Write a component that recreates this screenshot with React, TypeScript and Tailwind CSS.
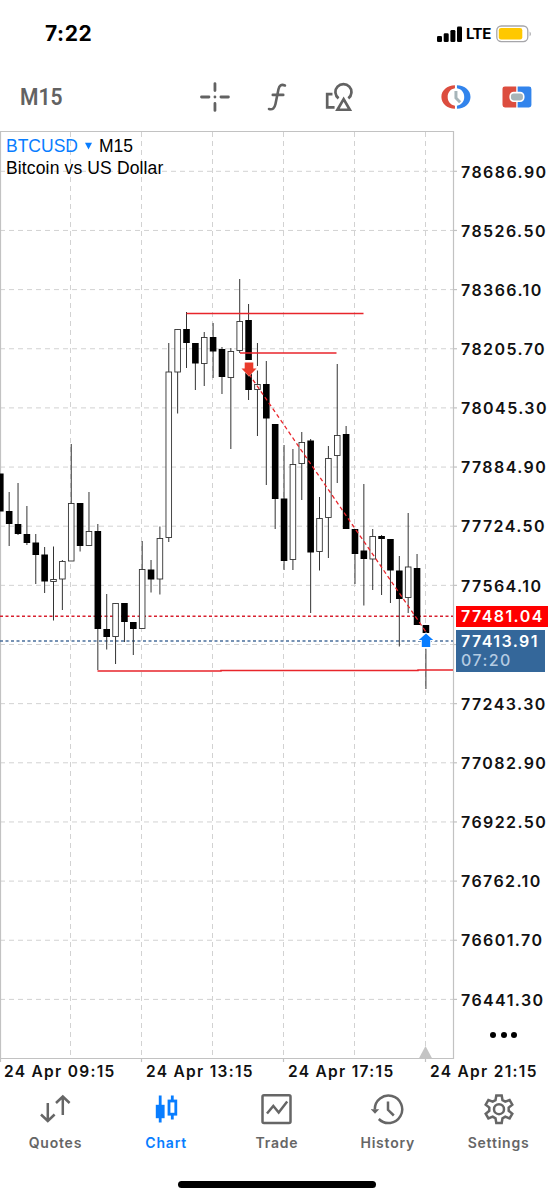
import type { ReactNode } from "react";

// [wick top, wick bottom, body top, body bottom, bullish]
type Candle = [number, number, number, number, boolean];

const candles: Candle[] = [
  [474, 511, 473.5, 511.5, false],
  [492, 546, 511, 524, false],
  [483, 535, 524, 534, false],
  [506, 545, 534, 543, false],
  [534, 584, 542.5, 555, false],
  [547, 593, 554.5, 581.5, false],
  [546.5, 620.5, 579.5, 581.5, true],
  [560, 610, 561.5, 579, true],
  [444, 561, 503.5, 561, true],
  [503, 551.5, 503, 546, false],
  [492, 546, 531.5, 545.5, true],
  [524, 670, 531, 629, false],
  [594, 649.5, 629, 637, false],
  [603, 664, 603.5, 636.5, true],
  [603, 642, 603, 622, false],
  [622, 655, 622, 629, false],
  [541, 629, 569.5, 628.5, true],
  [560, 592.5, 569.5, 579.5, false],
  [526.5, 594.5, 538.5, 579, true],
  [343, 542, 372, 537.5, true],
  [329, 413.5, 329.5, 372, true],
  [312, 368, 329, 343, false],
  [343, 390, 343, 363.5, false],
  [332, 386, 337.5, 363.5, true],
  [323, 378, 337, 351.5, false],
  [347, 394, 349, 377, false],
  [348, 449, 351.5, 377.5, true],
  [279, 353, 321.5, 350.5, true],
  [304, 400, 320, 390, false],
  [343, 436, 384.5, 389.5, true],
  [361, 485, 384, 418.5, false],
  [424, 529, 424, 499, false],
  [445, 570, 498.5, 561, false],
  [449, 570, 464.5, 559.5, true],
  [432, 500, 442.5, 463.5, true],
  [439, 613, 440.5, 552.5, false],
  [497, 570.5, 518.5, 551.5, true],
  [446, 558, 458.5, 517.5, true],
  [364, 483, 435.5, 455.5, true],
  [426, 529, 434, 529, false],
  [529, 584, 529, 554, false],
  [484, 605.5, 550.5, 559, false],
  [529, 590, 536.5, 559, true],
  [535, 595, 536, 539, false],
  [539, 603, 539, 570.5, false],
  [556, 646.5, 570.5, 599, false],
  [513, 613, 567, 597.5, true],
  [554, 625, 568, 625, false],
  [625, 689, 625, 633, false],
];

const prices = [
  "78686.90", "78526.50", "78366.10", "78205.70", "78045.30",
  "77884.90", "77724.50", "77564.10", "", "77243.30",
  "77082.90", "76922.50", "76762.10", "76601.70", "76441.30",
];

const times = ["24 Apr 09:15", "24 Apr 13:15", "24 Apr 17:15", "24 Apr 21:15"];

const gridX = [70.5, 141.5, 212.5, 283.5, 354.5, 425.5];

const StatusBar = () => (
  <div className="flex h-[66px] items-center justify-between pl-[45px] pr-[22px] pt-px">
    <span className="font-[Inter] text-[21px] font-bold leading-none tracking-[0.6px]">7:22</span>
    <div className="flex items-center">
      <svg width="25" height="16" viewBox="0 0 25 16">
        <rect x="0" y="10" width="5" height="6" rx="1.3" />
        <rect x="6.7" y="7.3" width="5" height="8.7" rx="1.3" />
        <rect x="13.4" y="4" width="5" height="12" rx="1.3" />
        <rect x="20" y="0.5" width="5" height="15.5" rx="1.3" />
      </svg>
      <span className="ml-[4px] w-[26px] font-[Inter] text-[15px] font-bold leading-none tracking-[-0.5px]">LTE</span>
      <svg className="ml-[4px]" width="36" height="18" viewBox="0 0 36 18">
        <rect x="0.8" y="1" width="31" height="15.6" rx="4.5" fill="#fff" stroke="#a6a6aa" strokeWidth="1.3" />
        <rect x="2.8" y="3" width="23.5" height="11.6" rx="2.3" fill="#ffc800" />
        <path d="M33.6 6.4c1.6.7 1.6 4.1 0 4.8z" fill="#a6a6aa" />
      </svg>
    </div>
  </div>
);

const Toolbar = () => (
  <div className="flex h-[65px] items-center pb-[4px] pl-[20px] pr-[22px] text-[#626262]">
    <span className="w-[181px] pt-[2px]">
      <span className="inline-block origin-left scale-x-[0.86] font-[Roboto] text-[24.5px] font-semibold leading-none">M15</span>
    </span>
    <svg width="30" height="30" viewBox="0 0 30 30" fill="none" stroke="currentColor" strokeWidth="2.8" strokeLinecap="round">
      <path d="M15 1.5v7M15 21.5v7M1.5 15h7.5M21 15h7.5M15 15v0" />
    </svg>
    <svg className="ml-[37px]" width="21" height="30" viewBox="0 0 21 30" fill="none" stroke="currentColor" strokeWidth="2.6" strokeLinecap="round">
      <path d="M18 3.4c-3.7-1.4-5.6 0-6.5 3.800L8.500 22c-.9 4.300-2.900 6-6.500 5M5.800 12.900h10.500" />
    </svg>
    <svg className="ml-[37px]" width="28" height="30" viewBox="0 0 28 30" fill="none" stroke="currentColor" strokeWidth="2.7">
      <path d="M7.5 12.2H2.2v13.2h7.4" />
      <path d="M13.6 16.4a8 8 0 1 1 9.800 0" />
      <path d="M18.700 17.200l-6.200 10.600h12.400z" />
    </svg>
    <svg className="ml-[88px]" width="30" height="26" viewBox="0 0 30 26">
      <path d="M14 1.3v3C9.500 5 6.700 8.500 6.700 13s2.800 8 7.300 8.700v3C6 24.700.4 19.500.4 13S6 1.300 14 1.300z" fill="#dc4d3f" />
      <path d="M16 1.300v3c4.500.7 7.300 4.200 7.300 8.700s-2.800 8-7.300 8.700v3c8 0 13.600-5.200 13.600-11.700S24 1.300 16 1.300z" fill="#3284ec" />
      <path d="M15 7v7l4.200 4.200" fill="none" stroke="#a7b5b9" strokeWidth="3" />
    </svg>
    <svg className="ml-[31px]" width="30" height="24" viewBox="0 0 30 24">
      <path d="M3 1.5h11.300v21H3A2.500 2.500 0 0 1 .5 20V4A2.500 2.500 0 0 1 3 1.500z" fill="#dc4d3f" />
      <path d="M15.700 1.500H27A2.500 2.500 0 0 1 29.500 4v16a2.500 2.500 0 0 1-2.500 2.500H15.700z" fill="#3284ec" />
      <rect x="8.2" y="7.6" width="13.6" height="8.6" rx="3.6" fill="#a7b5b9" stroke="#fff" strokeWidth="1.6" />
    </svg>
  </div>
);

const ChartCanvas = () => (
  <svg className="block" width="457" height="932" viewBox="0 131 457 932">
    <g stroke="#d2d2d2" strokeWidth="1" strokeDasharray="5 4">
      {prices.map((_, i) => (
        <path key={i} d={`M0 ${171.3 + i * 59.15}H453`} />
      ))}
      {gridX.map((x) => (
        <path key={x} d={`M${x} 132V1058`} />
      ))}
    </g>
    <g fill="none" stroke="#c2c2c2" strokeWidth="1.2">
      <path d="M0.5 1062V131.5H453.5V1058.5H0" />
      {[141.5, 283.5, 425.5].map((x) => (
        <path key={x} d={`M${x} 1058v4`} />
      ))}
      {prices.map((_, i) => (
        <path key={i} d={`M453 ${171.3 + i * 59.15}h4`} />
      ))}
    </g>
    <path d="M425.5 1046l6.7 12.5h-13.4z" fill="#c4c4c4" />

    <path d="M0 616.3H453" stroke="#d8202f" strokeWidth="1.6" strokeDasharray="3 2.5" />
    <path d="M0 641H453" stroke="#4a6f9c" strokeWidth="1.5" strokeDasharray="3 2.5" />

    {candles.map(([high, low, top, bottom, up], i) => {
      const x = 0.3 + i * 8.867;
      return (
        <g key={i}>
          <path d={`M${x} ${high}V${low}`} stroke="#333" strokeWidth="1" />
          <rect
            x={x - (up ? 2.8 : 3.3)}
            y={top}
            width={up ? 5.6 : 6.6}
            height={bottom - top}
            fill={up ? "#fff" : "#000"}
            stroke={up ? "#333" : "none"}
            strokeWidth="0.9"
          />
        </g>
      );
    })}

    <g fill="none" stroke="#e8252b" strokeWidth="1.5">
      <path d="M186.5 313.5H363.5" />
      <path d="M240 353H336.5" />
      <path d="M97.5 671H221V670.5H418V670H453" />
      <path d="M249 374L426 632" strokeWidth="1.3" strokeDasharray="4 3" />
    </g>

    {/* sell entry and buy exit */}
    <path d="M244 361h10M257.5 366v4.5" stroke="#fff" strokeWidth="2" />
    <path d="M244.7 362.5h8.6v6h3.2l-7.5 7.7-7.5-7.7h3.2z" fill="#ea3b2b" stroke="#fff" strokeWidth="1" paintOrder="stroke" />
    <path d="M426 633.5l7.2 6.5h-3v7h-8.4v-7h-3z" fill="#087dff" stroke="#fff" strokeWidth="2" paintOrder="stroke" />
    <path d="M421 648h10" stroke="#fff" strokeWidth="1.5" />
  </svg>
);

const PriceAxis = () => (
  <div className="relative flex-1 pt-[11px] font-[Inter] text-[16px] font-semibold tracking-[1.42px] text-[#111]">
    {prices.map((price, i) => (
      <div key={i} className="flex h-[59.15px] items-center pl-[4px]">{price}</div>
    ))}
    <div className="absolute left-[-1px] top-[474.5px] h-[21px] w-[92px] bg-[#ff0000] pl-[5px] leading-[21px] text-white">
      77481.04
    </div>
    <div className="absolute left-[-1px] top-[499px] h-[42px] w-[89px] bg-[#34679a] pl-[5px] leading-[20px] text-white">
      <div className="pt-px">77413.91</div>
      <div className="font-medium leading-[18px] text-[#b4cbe2]">07:20</div>
    </div>
    <div className="absolute left-[33px] top-[901px] flex gap-[4.5px]">
      <i className="size-[6px] rounded-full bg-black" />
      <i className="size-[6px] rounded-full bg-black" />
      <i className="size-[6px] rounded-full bg-black" />
    </div>
  </div>
);

const Tab = ({ label, active, children }: { label: string; active?: boolean; children: ReactNode }) => (
  <div className={`flex flex-1 flex-col items-center ${active ? "text-[#087dff]" : "text-[#666666]"}`}>
    <svg width="34" height="34" viewBox="0 0 34 34" fill="none" stroke="currentColor" strokeWidth="2.5">
      {children}
    </svg>
    <span className="mt-[7px] font-[Inter] text-[14px] font-semibold leading-[20px] tracking-[0.8px]">{label}</span>
  </div>
);

const TabBar = () => (
  <div className="flex h-[80px] pt-[7px]">
    <Tab label="Quotes">
      <path d="M9.8 11v18M3 22.5L9.8 29l6.8-6.5M24.8 23V4.500M18 11l6.800-6.500L31.600 11" />
    </Tab>
    <Tab label="Chart" active>
      <path d="M11.2 3.5v27M23.3 3.5v5M23.3 23v4.5" strokeWidth="2.8" />
      <rect x="6.8" y="12.8" width="8.8" height="13.4" fill="currentColor" stroke="none" />
      <rect x="20" y="9" width="6.8" height="13.2" strokeWidth="2.8" />
    </Tab>
    <Tab label="Trade">
      <rect x="2.5" y="3.3" width="28" height="27.8" rx="1.5" />
      <path d="M7 21.5l6.300-7.500 5.400 6.500 8.500-11" />
    </Tab>
    <Tab label="History">
      <path d="M3.8 17.5A13.700 13.700 0 1 1 7.800 27" />
      <path d="M-.2 17.300h8.400L4 21.800z" fill="currentColor" stroke="none" />
      <path d="M17 9.500v8.300l5.800 5.700" />
    </Tab>
    <Tab label="Settings">
      <path d="M14.3 3.500h5.400l.8 4.600 2.800 1.600 4.300-1.700 2.700 4.700-3.600 2.900v3.200l3.600 2.900-2.700 4.700-4.300-1.700-2.800 1.600-.8 4.600h-5.400l-.8-4.600-2.800-1.600-4.300 1.700-2.700-4.700 3.600-2.900v-3.200l-3.600-2.900L6.400 8l4.300 1.700 2.800-1.600z" />
      <circle cx="17" cy="17.2" r="5" />
    </Tab>
  </div>
);

export default function App() {
  return (
    <div className="flex h-[1200px] w-[554px] flex-col overflow-hidden bg-white text-black">
      <StatusBar />
      <Toolbar />
      <div className="relative flex h-[932px]">
        <ChartCanvas />
        <PriceAxis />
        <div className="absolute left-[6px] top-[4px] font-['Liberation_Sans'] text-[17.5px] leading-[22px]">
          <div className="flex items-center">
            <span className="text-[#087dff]">BTCUSD</span>
            <svg className="mx-[7px]" width="7" height="8" viewBox="0 0 7 8">
              <path d="M0 .8h7L3.5 7.5z" fill="#087dff" />
            </svg>
            <span>M15</span>
          </div>
          <div className="tracking-[0.14px]">Bitcoin vs US Dollar</div>
        </div>
      </div>
      <div className="flex h-[22px] pl-[4px] font-[Inter] text-[15.5px] font-semibold leading-[18px] tracking-[1.3px] text-[#111]">
        {times.map((time) => (
          <span key={time} className="w-[142px] shrink-0 whitespace-nowrap">{time}</span>
        ))}
      </div>
      <TabBar />
      <div className="mx-auto mt-[16px] h-[7px] w-[198px] rounded-full bg-black" />
    </div>
  );
}
